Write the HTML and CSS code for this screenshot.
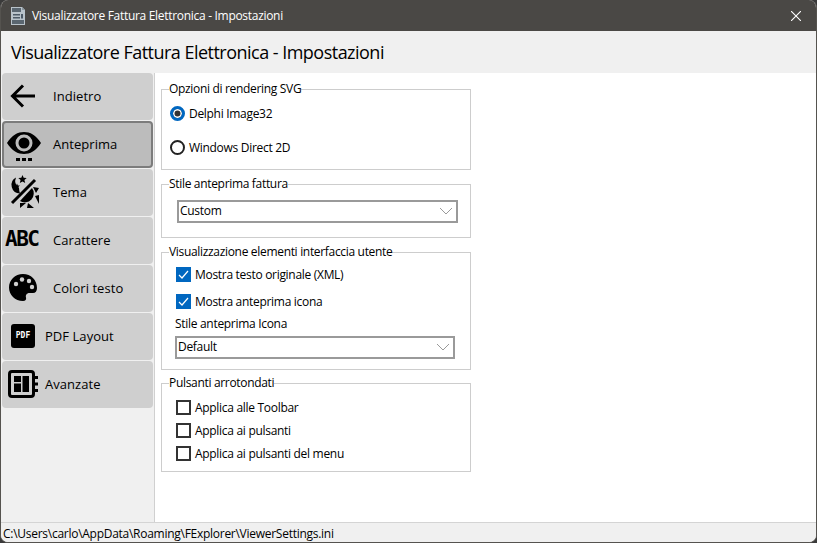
FILE: index.html
```html
<!DOCTYPE html>
<html lang="it">
<head>
<meta charset="utf-8">
<title>Visualizzatore Fattura Elettronica - Impostazioni</title>
<link rel="stylesheet" href="styles.css">
</head>
<body>
<div class="window">
  <header class="titlebar">
    <svg class="app-icon" width="18" height="18" viewBox="0 0 18 18"><path d="M2 0h11l3 3v15H2z" fill="#b9c3ca"/><path d="M13 0l3 3h-3z" fill="#8b97a0"/><rect x="3" y="1" width="9" height="4" fill="#5a6670"/><rect x="4" y="7" width="7" height="1.5" fill="#4d5a66"/><rect x="4" y="10" width="7" height="1.5" fill="#4d5a66"/><rect x="12" y="7" width="2" height="4.500" fill="#4d5a66"/><rect x="3" y="13" width="12" height="4" fill="#5a6670"/></svg>
    <span class="titlebar-text">Visualizzatore Fattura Elettronica - Impostazioni</span>
    <svg class="close" width="10" height="10" viewBox="0 0 10 10"><path d="M0 0L10 10M10 0L0 10" stroke="#fff" stroke-width="1.1"/></svg>
  </header>
  <h1 class="heading">Visualizzatore Fattura Elettronica - Impostazioni</h1>
  <div class="main">
    <nav class="sidebar">
      <div class="nav-btn">
        <span class="nav-icon icon-back"><svg width="26" height="26" viewBox="0 0 26 26"><path d="M25 13H3M13 2.500L2.500 13L13 23.500" fill="none" stroke="#000" stroke-width="3"/></svg></span>
        <span class="nav-label">Indietro</span>
      </div>
      <div class="nav-btn active">
        <span class="nav-icon"><svg width="36" height="36" viewBox="0 0 36 36"><path fill-rule="evenodd" d="M1 12C6 4 12 1 18 1s12 3 17 11c-5 8-11 11-17 11S6 20 1 12zM18 3.500a8.500 8.500 0 1 0 0 17a8.500 8.500 0 0 0 0-17z" fill="#000"/><circle cx="18" cy="12" r="5.500" fill="#000"/><rect x="10" y="27" width="4" height="3"/><rect x="16" y="27" width="4" height="3"/><rect x="22" y="27" width="4" height="3"/></svg></span>
        <span class="nav-label">Anteprima</span>
      </div>
      <div class="nav-btn">
        <span class="nav-icon icon-theme"><svg width="32" height="34" viewBox="0 0 32 34"><path d="M27 5L4 28" stroke="#000" stroke-width="3" fill="none"/><path d="M8 2.500a8.500 8.500 0 0 0 4 16a5 10 0 0 1-1-5.500 9 9 0 0 1-3-10.500z" fill="#000"/><path d="M14.500 0l1.200 2.800 3 .2-2.300 2 .8 3-2.700-1.600-2.700 1.600.8-3-2.300-2 3-.2z" fill="#000"/><path d="M9 8.500l.9 1.900 2 .2-1.500 1.400.4 2-1.800-1-1.800 1 .4-2-1.500-1.400 2-.2z" fill="#000"/><path d="M24 13L12 26A9 9 0 0 0 24 13z" fill="#000"/><path d="M25 12l6 1-3 5zM27 21l4-1v9zM12 28h6l-6 5zM20 28l6 5h-7z" fill="#000"/></svg></span>
        <span class="nav-label">Tema</span>
      </div>
      <div class="nav-btn">
        <span class="nav-icon"><span class="abc">ABC</span></span>
        <span class="nav-label">Carattere</span>
      </div>
      <div class="nav-btn">
        <span class="nav-icon icon-palette"><svg width="28" height="28" viewBox="0 0 28 28"><path fill-rule="evenodd" d="M14 0C6 0 0 6 0 13.500S6 27 14 27c2.500 0 3.500-1.500 3-3.500-.6-2.300.6-4.500 3.500-4.500H24c2.500 0 4-2 4-5C28 6 22 0 14 0z" fill="#000"/><circle cx="7" cy="10" r="2.200" fill="#cfcfcf"/><circle cx="13" cy="5.500" r="2.200" fill="#cfcfcf"/><circle cx="20" cy="7" r="2.200" fill="#cfcfcf"/><circle cx="23" cy="13" r="2.200" fill="#cfcfcf"/></svg></span>
        <span class="nav-label">Colori testo</span>
      </div>
      <div class="nav-btn compact">
        <span class="nav-icon pdf-wrap"><span class="pdf">PDF</span></span>
        <span class="nav-label">PDF Layout</span>
      </div>
      <div class="nav-btn compact">
        <span class="nav-icon"><svg width="30" height="28" viewBox="0 0 30 28"><rect x="1.500" y="1.500" width="24" height="25" rx="2.500" fill="none" stroke="#000" stroke-width="3"/><rect x="6" y="6" width="7" height="6"/><rect x="14.500" y="6" width="6.500" height="16"/><rect x="6" y="13.500" width="7" height="8.500"/><path d="M26 6h4v3h-4zM26 12.500h4v3h-4zM26 19h4v3h-4z"/></svg></span>
        <span class="nav-label">Avanzate</span>
      </div>
    </nav>
    <section class="content">
      <fieldset class="group group-svg">
        <legend>Opzioni di rendering SVG</legend>
        <label class="option radio-row first"><span class="radio checked"></span>Delphi Image32</label>
        <label class="option radio-row"><span class="radio"></span>Windows Direct 2D</label>
      </fieldset>
      <fieldset class="group group-style">
        <legend>Stile anteprima fattura</legend>
        <div class="select">Custom<svg class="chevron" width="14" height="8" viewBox="0 0 14 8"><path d="M1 1l6 6 6-6" fill="none" stroke="#9a9a9a"/></svg></div>
      </fieldset>
      <fieldset class="group group-ui">
        <legend>Visualizzazione elementi interfaccia utente</legend>
        <label class="option check-row"><span class="check checked"><svg width="15" height="15" viewBox="0 0 15 15"><path d="M3 8l3 3 6-7" fill="none" stroke="#fff" stroke-width="1.200"/></svg></span>Mostra testo originale (XML)</label>
        <label class="option check-row second"><span class="check checked"><svg width="15" height="15" viewBox="0 0 15 15"><path d="M3 8l3 3 6-7" fill="none" stroke="#fff" stroke-width="1.200"/></svg></span>Mostra anteprima icona</label>
        <div class="field-label">Stile anteprima Icona</div>
        <div class="select select-small">Default<svg class="chevron" width="14" height="8" viewBox="0 0 14 8"><path d="M1 1l6 6 6-6" fill="none" stroke="#9a9a9a"/></svg></div>
      </fieldset>
      <fieldset class="group group-round">
        <legend>Pulsanti arrotondati</legend>
        <label class="option plain-row"><span class="check"></span>Applica alle Toolbar</label>
        <label class="option plain-row"><span class="check"></span>Applica ai pulsanti</label>
        <label class="option plain-row"><span class="check"></span>Applica ai pulsanti del menu</label>
      </fieldset>
    </section>
  </div>
  <footer class="statusbar">C:\Users\carlo\AppData\Roaming\FExplorer\ViewerSettings.ini</footer>
</div>
</body>
</html>
```
FILE: styles.css
```css
* { box-sizing: border-box; }
html, body { margin: 0; height: 100%; background: #3a3a3a; }
body { font-family: "Open Sans", "Noto Sans", sans-serif; font-size: 12px; color: #000; }
.window { width: 817px; height: 543px; display: flex; flex-direction: column; background: #f0f0f0; border: 1px solid #55534f; border-top: 0; border-radius: 8px; overflow: hidden; }
.titlebar { height: 31px; flex: none; background: #4a4845; color: #fff; display: flex; align-items: center; padding: 0 16px 0 8px; margin: 0 -1px; }
.app-icon { margin-right: 5px; flex: none; margin-left: 1px; }
.titlebar-text { flex: 1; font-size: 12px; letter-spacing: -.3px; }
.heading { height: 42px; flex: none; margin: 0; padding: 2px 0 0 10px; font-size: 18px; font-weight: 400; line-height: 39px; letter-spacing: -.52px; background: #f0f0f0; }
.main { flex: 1; display: flex; min-height: 0; }
.sidebar { width: 154px; flex: none; padding: 0 0 0 1px; display: flex; flex-direction: column; gap: 1px; border-right: 1px solid #d0d0d0; }
.nav-btn { width: 151px; height: 47px; flex: none; background: #cfcfcf; border-radius: 4px; display: flex; align-items: center; padding-bottom: 2px; font-size: 13px; }
.nav-btn.active { background: #bcbcbc; border: 2px solid #7c7c7c; padding-bottom: 2px; }
.nav-icon { width: 51px; flex: none; display: flex; align-items: center; padding-left: 3px; }
.active .nav-icon { padding-left: 2px; width: 49px; }
.active svg { margin-top: 10px; }
.icon-back { padding-left: 8px; }
.icon-theme { padding-left: 6px; }
.icon-palette { padding-left: 7px; }
.compact .nav-icon { width: 43px; padding-left: 6px; }
.nav-label { letter-spacing: .05px; }
.abc { font-family: "DejaVu Sans Mono", monospace; font-size: 21px; font-weight: 700; letter-spacing: -1.500px; line-height: 1; }
.pdf { width: 24px; height: 24px; border-radius: 3px; background: #000; color: #fff; font-family: "DejaVu Sans Mono", monospace; font-size: 8px; font-weight: 700; display: flex; align-items: center; justify-content: center; letter-spacing: 0; }
.compact .pdf-wrap { padding-left: 9px; }
.content { flex: 1; background: #fff; padding: 8px 0 0 6px; }
.group { width: 310px; margin: 0 0 6px; padding: 0 0 0 8px; border: 1px solid #cdcdcd; min-width: 0; display: block; }
.group legend { margin-left: -1px; padding: 0; line-height: 16px; letter-spacing: -.32px; }
.group-svg { height: 89px; }
.group-style { height: 62px; }
.group-ui { height: 126px; margin-bottom: 5px; }
.group-round { height: 97px; }
.option { display: flex; align-items: center; letter-spacing: -.3px; }
.radio-row.first { margin-top: 7px; height: 18px; }
.radio-row { height: 18px; margin-top: 16px; }
.radio { width: 15px; height: 15px; border-radius: 50%; border: 2px solid #222; margin-right: 4px; flex: none; background: #fff; }
.radio.checked { border: 3px solid #0067c0; background: #333; box-shadow: inset 0 0 0 1.500px #fff; }
.select { height: 23px; border: 2px solid #9a9a9a; background: #fff; display: flex; align-items: center; justify-content: space-between; padding: 0 3px 2px 1px; width: 281px; margin: 8px 0 0 7px; letter-spacing: -.3px; }
.select-small { margin: 3px 0 0 5px; width: 280px; }
.check { width: 15px; height: 15px; border: 2px solid #333; margin: 0 4px 0 6px; flex: none; background: #fff; display: flex; }
.check.checked { background: #0067c0; border: 0; }
.check-row { height: 18px; margin-top: 5px; }
.check-row.second { margin-top: 9px; }
.field-label { margin: 5px 0 0 5px; height: 18px; line-height: 18px; letter-spacing: -.3px; }
.plain-row { height: 18px; margin-bottom: 5px; }
.plain-row:first-of-type { margin-top: 7px; }
.statusbar { height: 20px; flex: none; border-top: 1px solid #d4d4d4; padding-left: 2px; line-height: 21px; letter-spacing: -.27px; background: #f0f0f0; }
```
